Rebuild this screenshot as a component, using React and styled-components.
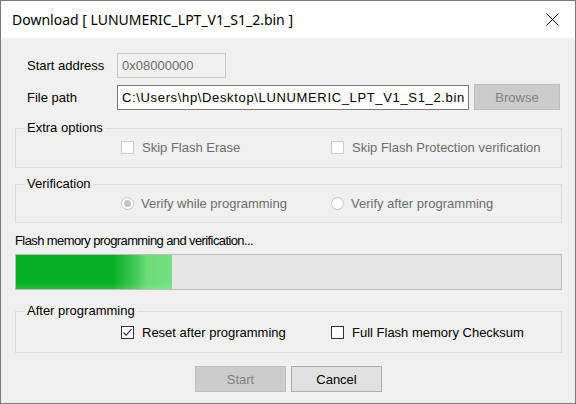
import React from 'react';
import styled, { createGlobalStyle } from 'styled-components';

const GlobalStyle = createGlobalStyle`
  html, body {
    margin: 0;
    padding: 0;
    background: #f0f0f0;
  }
  body {
    font-family: "Liberation Sans", Arial, sans-serif;
    font-size: 13px;
  }
`;

const Window = styled.div`
  width: 576px;
  height: 404px;
  box-sizing: border-box;
  border: 1px solid #7a7a7a;
  background: #f0f0f0;
  display: flex;
  flex-direction: column;
`;

const TitleBar = styled.div`
  height: 37px;
  flex: none;
  background: #ffffff;
  display: flex;
  align-items: center;
  padding-left: 11px;
`;

const Title = styled.span`
  font-family: "Noto Sans", "Open Sans", sans-serif;
  font-size: 14px;
  color: #000;
`;

const CloseButton = styled.div`
  margin-left: auto;
  width: 46px;
  height: 100%;
  display: flex;
  align-items: center;
  justify-content: center;
`;

const Body = styled.div`
  display: flex;
  flex-direction: column;
  padding: 0 13px 0 14px;
`;

const FieldRow = styled.div`
  display: flex;
  align-items: center;
  margin-top: ${p => p.$mt}px;
`;

const FieldLabel = styled.span`
  width: 90px;
  padding-left: 12px;
  color: #000;
  line-height: 15px;
`;

const TextBox = styled.div`
  box-sizing: border-box;
  width: ${p => p.$w}px;
  height: 25px;
  display: flex;
  align-items: center;
  padding-left: 4px;
  border: 1px solid ${p => (p.$disabled ? '#cccccc' : '#7a7a7a')};
  background: ${p => (p.$disabled ? '#f0f0f0' : '#ffffff')};
  color: ${p => (p.$disabled ? '#6d6d6d' : '#000')};
  letter-spacing: ${p => p.$spacing || 0}px;
  white-space: nowrap;
  overflow: hidden;
`;

const Button = styled.div`
  box-sizing: border-box;
  width: ${p => p.$w}px;
  height: 26px;
  margin-left: ${p => p.$ml || 0}px;
  display: flex;
  align-items: center;
  justify-content: center;
  border: 1px solid ${p => (p.$disabled ? '#bfbfbf' : '#adadad')};
  background: ${p => (p.$disabled ? '#cccccc' : '#e1e1e1')};
  color: ${p => (p.$disabled ? '#838383' : '#000')};
`;

const GroupBox = styled.section`
  margin-top: ${p => p.$mt}px;
  padding: 0 0 ${p => p.$pb}px;
  border: 1px solid #dcdcdc;
`;

const GroupTitle = styled.div`
  display: table;
  margin: -9px 0 ${p => p.$gap}px 9px;
  padding: 0 2px;
  line-height: 16px;
  background: #f0f0f0;
  color: #000;
`;

const OptionRow = styled.div`
  display: flex;
  padding-left: 105px;
`;

const Option = styled.label`
  flex: ${p => (p.$last ? '1 1 0' : '0 0 210px')};
  min-width: 0;
  display: flex;
  align-items: center;
  gap: ${p => p.$gap || 8}px;
  line-height: 15px;
  color: ${p => (p.$disabled ? '#6d6d6d' : '#000')};
  white-space: nowrap;
`;

const StatusText = styled.div`
  margin-top: 10px;
  line-height: 15px;
  letter-spacing: -0.6px;
  color: #000;
`;

const ProgressTrack = styled.div`
  box-sizing: border-box;
  margin-top: 6px;
  height: 36px;
  border: 1px solid #bcbcbc;
  background: #e6e6e6;
`;

const ProgressFill = styled.div`
  height: 100%;
  background:
    linear-gradient(to bottom, rgba(255,255,255,0) 80%, rgba(255,255,255,0.12) 100%),
    linear-gradient(to right, #06b025 0%, #06b025 62%, #3fc955 76%, #6bdc78 84%, #74e080 100%);
`;

const ButtonBar = styled.div`
  display: flex;
  justify-content: center;
  gap: 5px;
  margin-top: 13px;
`;

const CheckBox = ({ checked, disabled }) => (
  <svg width="13" height="13" viewBox="0 0 13 13">
    <rect x="0.5" y="0.5" width="12" height="12" fill="#fff" stroke={disabled ? '#cccccc' : '#333333'} />
    {checked && (
      <path d="M2.5 6.5 L5.2 9.2 L10.5 3.2" fill="none" stroke="#333" strokeWidth="1.2" />
    )}
  </svg>
);

const Radio = ({ checked }) => (
  <svg width="13" height="13" viewBox="0 0 13 13">
    <circle cx="6.5" cy="6.5" r="6" fill="#fff" stroke="#c4c4c4" />
    {checked && <circle cx="6.5" cy="6.5" r="3.5" fill="#c4c4c4" />}
  </svg>
);

const progress = 157 / 547;

export default function App() {
  return (
    <>
      <GlobalStyle />
      <Window>
        <TitleBar>
          <Title>Download [ LUNUMERIC_LPT_V1_S1_2.bin ]</Title>
          <CloseButton>
            <svg width="13" height="13" viewBox="0 0 13 13">
              <path d="M0.5 0.5 L12.5 12.5 M12.5 0.5 L0.5 12.5" stroke="#000" strokeWidth="1" />
            </svg>
          </CloseButton>
        </TitleBar>
        <Body>
          <FieldRow $mt={15}>
            <FieldLabel>Start address</FieldLabel>
            <TextBox $w={109} $disabled>0x08000000</TextBox>
          </FieldRow>
          <FieldRow $mt={6}>
            <FieldLabel>File path</FieldLabel>
            <TextBox $w={352} $spacing={0.65}>C:\Users\hp\Desktop\LUNUMERIC_LPT_V1_S1_2.bin</TextBox>
            <Button $w={86} $ml={5} $disabled>Browse</Button>
          </FieldRow>

          <GroupBox $mt={18} $pb={12}>
            <GroupTitle $gap={4}>Extra options</GroupTitle>
            <OptionRow>
              <Option $disabled>
                <CheckBox disabled />
                Skip Flash Erase
              </Option>
              <Option $disabled $last>
                <CheckBox disabled />
                Skip Flash Protection verification
              </Option>
            </OptionRow>
          </GroupBox>

          <GroupBox $mt={16} $pb={11}>
            <GroupTitle $gap={4}>Verification</GroupTitle>
            <OptionRow>
              <Option $disabled $gap={7}>
                <Radio checked />
                Verify while programming
              </Option>
              <Option $disabled $gap={7} $last>
                <Radio />
                Verify after programming
              </Option>
            </OptionRow>
          </GroupBox>

          <StatusText>Flash memory programming and verification...</StatusText>
          <ProgressTrack>
            <ProgressFill style={{ width: `${progress * 100}%` }} />
          </ProgressTrack>

          <GroupBox $mt={21} $pb={12}>
            <GroupTitle $gap={6}>After programming</GroupTitle>
            <OptionRow>
              <Option>
                <CheckBox checked />
                Reset after programming
              </Option>
              <Option $last>
                <CheckBox />
                Full Flash memory Checksum
              </Option>
            </OptionRow>
          </GroupBox>

          <ButtonBar>
            <Button $w={91} $disabled>Start</Button>
            <Button $w={91}>Cancel</Button>
          </ButtonBar>
        </Body>
      </Window>
    </>
  );
}
